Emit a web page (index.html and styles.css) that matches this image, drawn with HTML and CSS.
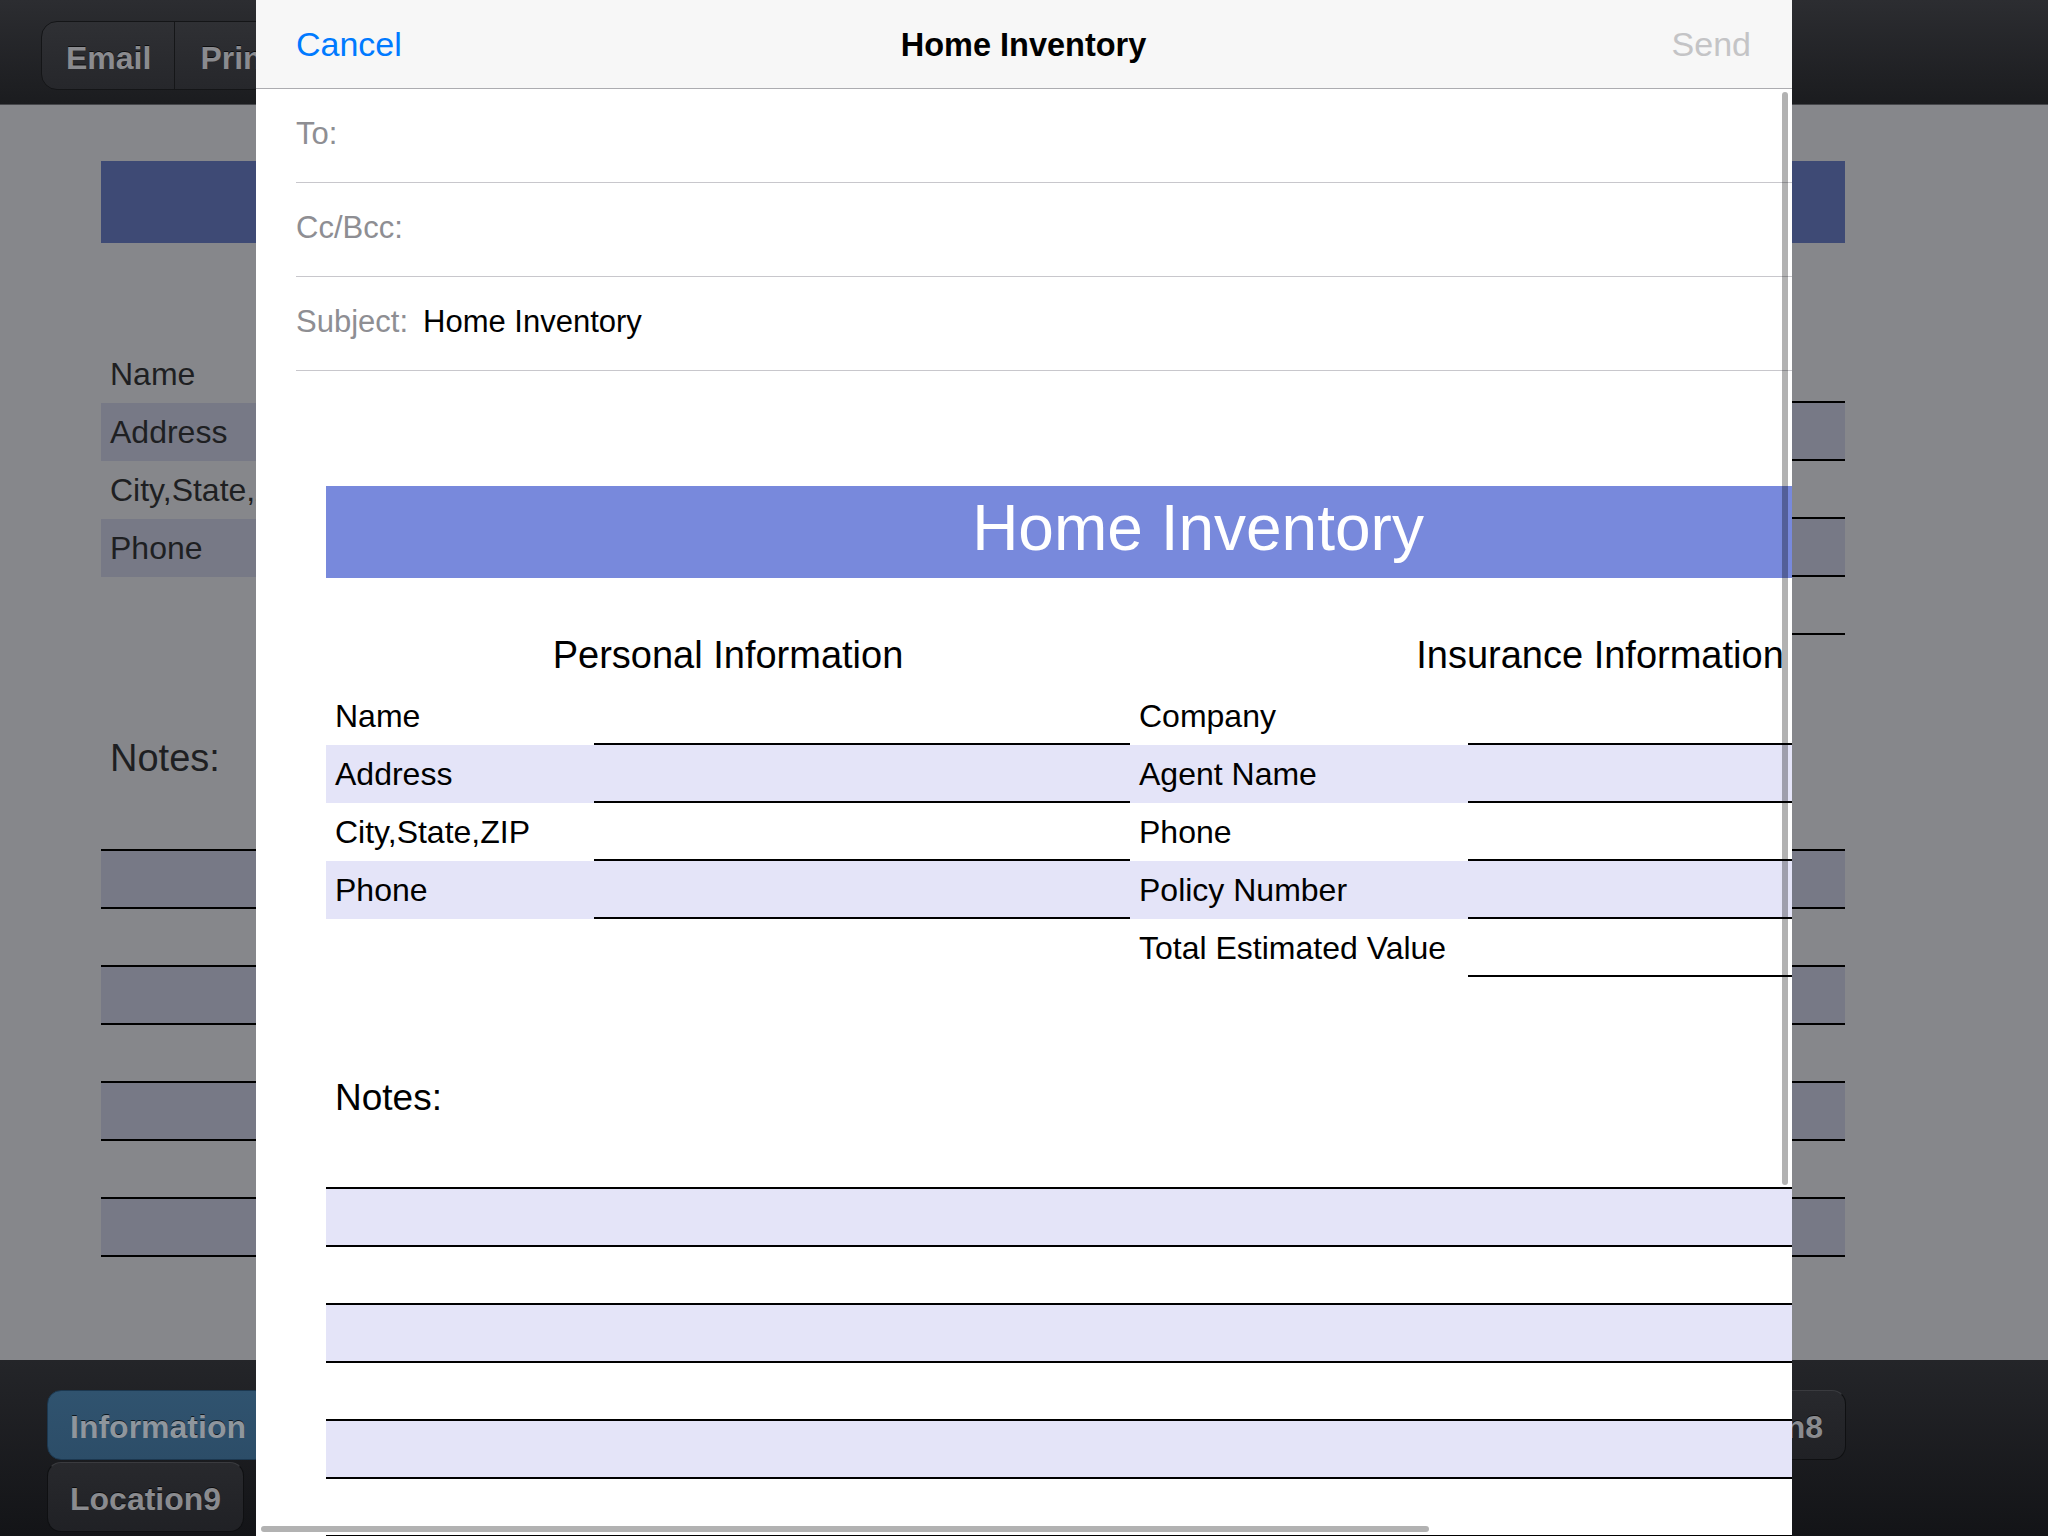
FILE: index.html
```html
<!DOCTYPE html>
<html lang="en">
<head>
  <meta charset="UTF-8" />
  <meta name="viewport" content="width=device-width, initial-scale=1.0"/>
  <title>Home Inventory</title>
  <link rel="stylesheet" href="styles.css">
</head>
<body>
  <div class="app">
    <div class="toolbar">
      <div class="segmented">
        <span class="segment">Email</span>
        <span class="segment">Print</span>
        <span class="segment">Save</span>
      </div>
    </div>

    <div class="form-area" id="formArea"></div>

    <div class="tabbar">
      <div class="tab-row">
        <span class="tab active">Information</span>
        <span class="tab">Location1</span>
        <span class="tab">Location2</span>
        <span class="tab">Location3</span>
        <span class="tab">Location4</span>
        <span class="tab">Location5</span>
        <span class="tab">Location6</span>
        <span class="tab">Location7</span>
        <span class="tab">Location8</span>
      </div>
      <div class="tab-row">
        <span class="tab">Location9</span>
      </div>
    </div>
  </div>

  <div class="sheet">
    <div class="sheet-header">
      <span class="nav-btn cancel">Cancel</span>
      <span class="sheet-title">Home Inventory</span>
      <span class="nav-btn send">Send</span>
    </div>

    <div class="field"><span class="field-label">To:</span></div>
    <div class="field"><span class="field-label">Cc/Bcc:</span></div>
    <div class="field"><span class="field-label">Subject:</span><span class="field-value">Home Inventory</span></div>

    <div class="message-body">
      <div class="doc">
        <div class="doc-banner">Home Inventory</div>

        <div class="doc-info">
          <div class="doc-table personal">
            <h3>Personal Information</h3>
            <div class="doc-row"><span class="label">Name</span><span class="value"></span></div>
            <div class="doc-row alt"><span class="label">Address</span><span class="value"></span></div>
            <div class="doc-row"><span class="label">City,State,ZIP</span><span class="value"></span></div>
            <div class="doc-row alt"><span class="label">Phone</span><span class="value"></span></div>
          </div>

          <div class="doc-table insurance">
            <h3>Insurance Information</h3>
            <div class="doc-row"><span class="label">Company</span><span class="value"></span></div>
            <div class="doc-row alt"><span class="label">Agent Name</span><span class="value"></span></div>
            <div class="doc-row"><span class="label">Phone</span><span class="value"></span></div>
            <div class="doc-row alt"><span class="label">Policy Number</span><span class="value"></span></div>
            <div class="doc-row"><span class="label">Total Estimated Value</span><span class="value"></span></div>
          </div>
        </div>

        <div class="doc-notes">
          <h3>Notes:</h3>
          <div class="note-line"></div>
          <div class="note-line alt"></div>
          <div class="note-line"></div>
          <div class="note-line alt"></div>
          <div class="note-line"></div>
          <div class="note-line alt"></div>
          <div class="note-line"></div>
          <div class="note-line alt"></div>
        </div>
      </div>
    </div>

    <div class="scroll-v"></div>
    <div class="scroll-h"></div>
  </div>

  <script>
    // the form behind the mail sheet is the same inventory page
    const page = document.querySelector(".message-body .doc").cloneNode(true);
    page.classList.add("doc-dim");
    document.getElementById("formArea").appendChild(page);
  </script>
</body>
</html>
```

FILE: styles.css
```css
body {
  margin: 0;
  width: 2048px;
  height: 1536px;
  overflow: hidden;
  position: relative;
  font-family: "Liberation Sans", Arial, sans-serif;
  background-color: #86878b;
}

.app {
  display: flex;
  flex-direction: column;
  height: 1536px;
}

/* top toolbar */
.toolbar {
  height: 105px;
  box-sizing: border-box;
  padding: 21px 0 0 41px;
  background: linear-gradient(#2c2d31, #1b1c1f);
  border-bottom: 1px solid #46474b;
  flex: none;
}

.segmented {
  display: inline-flex;
  height: 69px;
  box-sizing: border-box;
  border: 1px solid #141517;
  border-radius: 16px;
  background: linear-gradient(#2f3034, #26272b);
  overflow: hidden;
}

.segment {
  padding: 6px 23px 0 24px;
  line-height: 61px;
  font-size: 32px;
  font-weight: bold;
  color: #8a8b8f;
  text-shadow: 0 -1px 0 rgba(0, 0, 0, 0.7);
}

.segment + .segment {
  border-left: 1px solid #151618;
  padding-left: 25px;
}

/* form behind the sheet */
.form-area {
  flex: 1;
  padding-left: 101px;
  overflow: hidden;
}

/* bottom location tabs */
.tabbar {
  height: 176px;
  box-sizing: border-box;
  padding: 30px 0 0 47px;
  background: linear-gradient(#242529, #131417);
  flex: none;
}

.tab-row {
  display: flex;
  justify-content: space-between;
  width: 1798px;
  margin-bottom: 2px;
}

.tab-row:last-child {
  justify-content: flex-start;
}

.tab {
  height: 70px;
  box-sizing: border-box;
  padding: 4px 22px 0;
  line-height: 64px;
  font-size: 32px;
  font-weight: bold;
  color: #8a8b8f;
  text-shadow: 0 -1px 0 rgba(0, 0, 0, 0.7);
  background: linear-gradient(#28292d, #202125);
  border: 1px solid #0f1012;
  border-top-color: #3a3b3f;
  border-radius: 14px;
}

.tab.active {
  color: #8f969d;
  background: linear-gradient(#30536f, #2c4d68);
  border-color: #1c3850;
}

/* inventory page, used in the mail body and behind it */
.doc {
  width: 1744px;
  color: #000;
}

.doc-banner {
  height: 92px;
  margin-top: 115px;
  background-color: #7889dc;
  color: #fff;
  font-size: 64px;
  line-height: 84px;
  text-align: center;
}

.doc-info {
  display: flex;
}

.personal {
  width: 804px;
}

.insurance {
  width: 940px;
}

.doc-table h3 {
  margin: 48px 0 3px;
  font-size: 38px;
  font-weight: normal;
  line-height: 58px;
  text-align: center;
  white-space: nowrap;
}

.doc-row {
  display: flex;
  height: 58px;
  font-size: 32px;
  line-height: 58px;
}

.doc-row.alt,
.note-line.alt {
  background-color: #e4e4f8;
}

.doc-row .label {
  width: 268px;
  box-sizing: border-box;
  padding-left: 9px;
  white-space: nowrap;
}

.insurance .label {
  width: 338px;
}

.doc-row .value {
  flex: 1;
  border-bottom: 2px solid #000;
}

.doc-notes h3 {
  margin: 92px 0 0;
  padding: 0 0 4px 9px;
  font-size: 37px;
  font-weight: normal;
  line-height: 58px;
}

.note-line {
  height: 58px;
  box-sizing: border-box;
  border-bottom: 2px solid #000;
}

/* dimmed copy under the sheet */
.doc-dim {
  color: #1e1f22;
}

.doc-dim .doc-banner {
  height: 82px;
  margin-top: 56px;
  background-color: #3e4a75;
  color: #86878b;
}

.doc-dim .doc-table h3 {
  margin-top: 41px;
}

.doc-dim .doc-notes h3 {
  margin-top: 94px;
  padding-bottom: 6px;
  font-size: 38px;
}

.doc-dim .doc-row.alt,
.doc-dim .note-line.alt {
  background-color: #777986;
}

/* mail compose sheet */
.sheet {
  position: absolute;
  left: 256px;
  top: 0;
  width: 1536px;
  height: 1536px;
  background-color: #fff;
  overflow: hidden;
}

.sheet-header {
  display: grid;
  grid-template-columns: 1fr auto 1fr;
  align-items: center;
  height: 88px;
  padding: 0 41px 0 40px;
  background-color: #f7f7f7;
  border-bottom: 1px solid #acacb0;
}

.nav-btn {
  font-size: 34px;
}

.cancel {
  color: #007aff;
}

.send {
  color: #c4c4c6;
  justify-self: end;
}

.sheet-title {
  padding-top: 2px;
  font-size: 32.5px;
  font-weight: bold;
  color: #000;
}

.field {
  display: flex;
  align-items: center;
  gap: 15px;
  height: 94px;
  box-sizing: border-box;
  margin-left: 40px;
  padding-bottom: 4px;
  border-bottom: 1px solid #c8c7cc;
  font-size: 31px;
}

.field-label {
  color: #8e8e93;
}

.field-value {
  color: #000;
}

.message-body {
  padding-left: 70px;
}

.scroll-v,
.scroll-h {
  position: absolute;
  background-color: rgba(0, 0, 0, 0.3);
  border-radius: 3px;
}

.scroll-v {
  left: 1526px;
  top: 92px;
  width: 6px;
  height: 1093px;
}

.scroll-h {
  left: 5px;
  top: 1526px;
  width: 1168px;
  height: 6px;
}
```
